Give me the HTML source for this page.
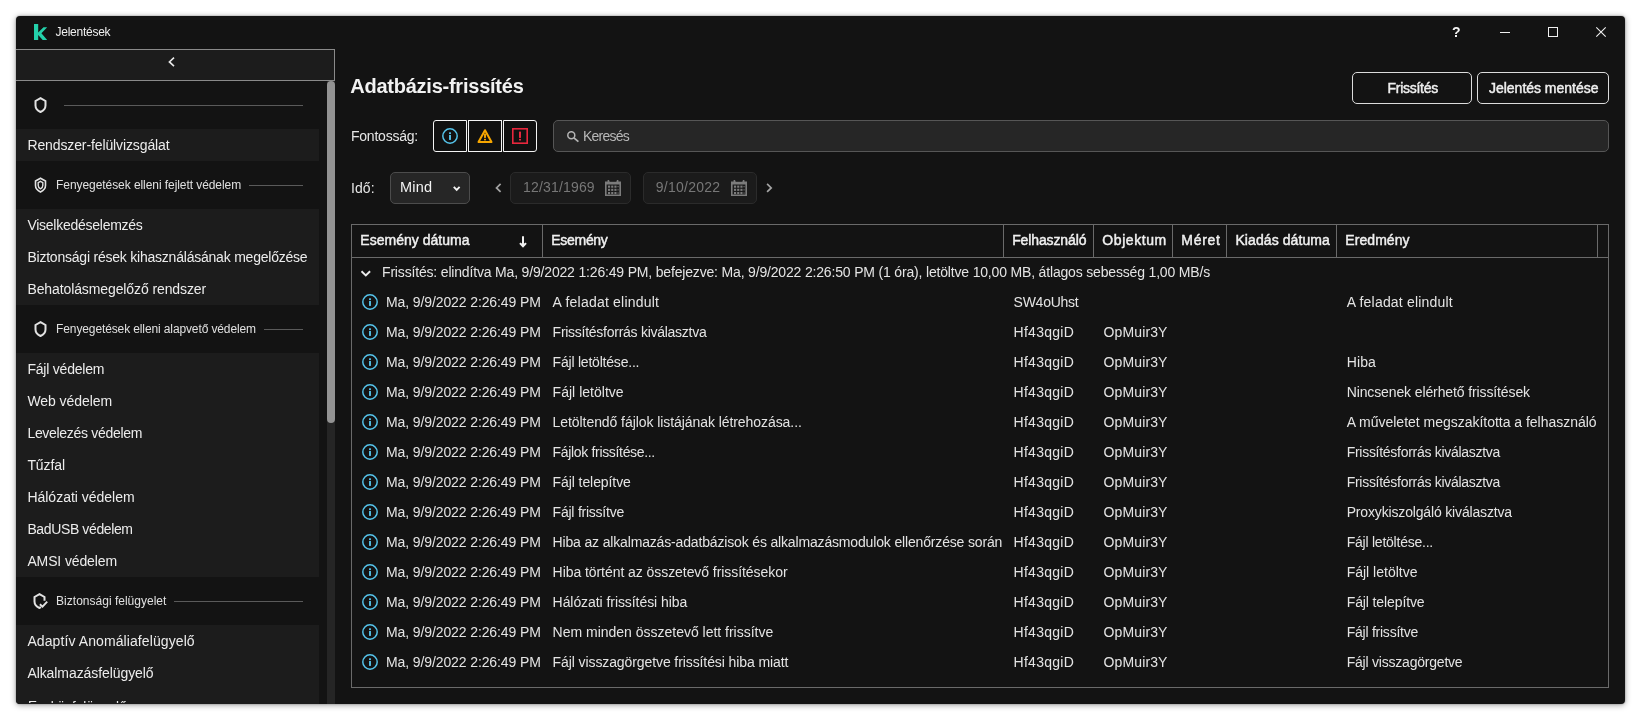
<!DOCTYPE html>
<html lang="hu">
<head>
<meta charset="utf-8">
<title>Jelentések</title>
<style>
*{box-sizing:border-box;margin:0;padding:0}
html,body{width:1641px;height:720px;overflow:hidden;background:#fff}
body{font-family:'Liberation Sans',sans-serif;position:relative;color:#e4e4e4}
.win{will-change:transform;position:absolute;left:16px;top:16px;width:1609px;height:688px;background:#131313;border-radius:4px;overflow:hidden;box-shadow:0 1px 6px rgba(0,0,0,.38),0 0 2px rgba(0,0,0,.35)}
.win *{position:absolute}
.titlebar,.sidebar,.main,.table,.row{position:static!important}
.t{white-space:nowrap;display:block}
.item{left:0;width:303px;height:32px;background:#1c1c1c}
.hl{height:1px;background:#5a5a5a}
svg{overflow:visible}
</style>
</head>
<body>
<div class="win">
<div class="titlebar">
<svg style="left:18px;top:8px" width="13" height="16" viewBox="0 0 13 16"><path d="M0 0H4.2V8.5L9.5 3.2H13.2L7.4 9.3 13.2 16H8.7L4.2 11V16H0Z" fill="#24d1ab"/></svg>
<span class="t" style="left:39.5px;top:9.7px;font-size:12px;line-height:12px;color:#f0f0f0;letter-spacing:-0.255px">Jelentések</span>
<span class="t" style="left:1436.1px;top:9.3px;font-size:14px;line-height:14px;color:#f4f4f4;letter-spacing:-0.102px;font-weight:700">?</span>
<svg style="left:1484px;top:11px" width="10" height="10" viewBox="0 0 10 10"><path d="M0 5.5H10" stroke="#f0f0f0" stroke-width="1"/></svg>
<svg style="left:1532px;top:11px" width="10" height="10" viewBox="0 0 10 10"><rect x="0.5" y="0.5" width="9" height="9" fill="none" stroke="#f0f0f0" stroke-width="1"/></svg>
<svg style="left:1580px;top:11px" width="10" height="10" viewBox="0 0 10 10"><path d="M0.3 0.3L9.7 9.7M9.7 0.3L0.3 9.7" stroke="#f0f0f0" stroke-width="1.1"/></svg>
</div>
<div class="sidebar">
<div class="collapse" style="left:0px;top:33px;width:319px;height:32px;background:#1c1c1c;border:1px solid #8a8a8a;border-left:none"></div>
<svg style="left:152px;top:41px" width="7" height="10" viewBox="0 0 7 10"><path d="M6 0.6L1.4 4.9 6 9.2" fill="none" stroke="#e8e8e8" stroke-width="1.6"/></svg>
<div style="left:311px;top:65px;width:8px;height:623px;background:#252525"></div>
<div style="left:311px;top:65px;width:8px;height:342px;background:#939393;border-radius:4px"></div>
<svg style="left:17.5px;top:81px" width="13" height="16" viewBox="0 0 13 16"><path d="M6.5 1.2 11.5 4V8.6C11.5 11.6 9.4 13.7 6.5 15 3.6 13.7 1.5 11.6 1.5 8.6V4Z" fill="none" stroke="#e2e2e2" stroke-width="2"/></svg>
<div class="hl" style="left:48px;top:89px;width:239px;height:1px;"></div>
<div class="item" style="left:0px;top:113px;width:303px;height:32px;"></div>
<span class="t" style="left:11.4px;top:122.0px;font-size:14px;line-height:14px;color:#ececec;letter-spacing:-0.112px">Rendszer-felülvizsgálat</span>
<svg style="left:17.5px;top:161px" width="13" height="16" viewBox="0 0 13 16"><path d="M6.5 1.2 11.5 4V8.6C11.5 11.6 9.4 13.7 6.5 15 3.6 13.7 1.5 11.6 1.5 8.6V4Z" fill="none" stroke="#e2e2e2" stroke-width="1.6"/><path d="M6.5 4.4 8.8 5.7V8.4C8.8 10 7.8 11.1 6.5 11.8 5.2 11.1 4.2 10 4.2 8.4V5.7Z" fill="none" stroke="#e2e2e2" stroke-width="1.4"/></svg>
<span class="t" style="left:40.1px;top:162.7px;font-size:12px;line-height:12px;color:#e0e0e0;letter-spacing:-0.070px">Fenyegetések elleni fejlett védelem</span>
<div class="hl" style="left:233.1px;top:169px;width:53.9px;height:1px;"></div>
<div class="item" style="left:0px;top:193px;width:303px;height:32px;"></div>
<span class="t" style="left:11.4px;top:202.0px;font-size:14px;line-height:14px;color:#ececec;letter-spacing:-0.258px">Viselkedéselemzés</span>
<div class="item" style="left:0px;top:225px;width:303px;height:32px;"></div>
<span class="t" style="left:11.4px;top:234.0px;font-size:14px;line-height:14px;color:#ececec;letter-spacing:-0.220px">Biztonsági rések kihasználásának megelőzése</span>
<div class="item" style="left:0px;top:257px;width:303px;height:32px;"></div>
<span class="t" style="left:11.4px;top:266.0px;font-size:14px;line-height:14px;color:#ececec;letter-spacing:-0.103px">Behatolásmegelőző rendszer</span>
<svg style="left:17.5px;top:305px" width="13" height="16" viewBox="0 0 13 16"><path d="M6.5 1.2 11.5 4V8.6C11.5 11.6 9.4 13.7 6.5 15 3.6 13.7 1.5 11.6 1.5 8.6V4Z" fill="none" stroke="#e2e2e2" stroke-width="2"/></svg>
<span class="t" style="left:40.1px;top:306.7px;font-size:12px;line-height:12px;color:#e0e0e0;letter-spacing:-0.119px">Fenyegetések elleni alapvető védelem</span>
<div class="hl" style="left:248px;top:313px;width:39px;height:1px;"></div>
<div class="item" style="left:0px;top:337px;width:303px;height:32px;"></div>
<span class="t" style="left:11.4px;top:346.0px;font-size:14px;line-height:14px;color:#ececec;letter-spacing:-0.210px">Fájl védelem</span>
<div class="item" style="left:0px;top:369px;width:303px;height:32px;"></div>
<span class="t" style="left:11.4px;top:378.0px;font-size:14px;line-height:14px;color:#ececec;letter-spacing:-0.048px">Web védelem</span>
<div class="item" style="left:0px;top:401px;width:303px;height:32px;"></div>
<span class="t" style="left:11.4px;top:410.0px;font-size:14px;line-height:14px;color:#ececec;letter-spacing:-0.300px">Levelezés védelem</span>
<div class="item" style="left:0px;top:433px;width:303px;height:32px;"></div>
<span class="t" style="left:11.4px;top:442.0px;font-size:14px;line-height:14px;color:#ececec;letter-spacing:-0.093px">Tűzfal</span>
<div class="item" style="left:0px;top:465px;width:303px;height:32px;"></div>
<span class="t" style="left:11.4px;top:474.0px;font-size:14px;line-height:14px;color:#ececec;letter-spacing:-0.009px">Hálózati védelem</span>
<div class="item" style="left:0px;top:497px;width:303px;height:32px;"></div>
<span class="t" style="left:11.4px;top:506.0px;font-size:14px;line-height:14px;color:#ececec;letter-spacing:-0.374px">BadUSB védelem</span>
<div class="item" style="left:0px;top:529px;width:303px;height:32px;"></div>
<span class="t" style="left:11.4px;top:538.0px;font-size:14px;line-height:14px;color:#ececec;letter-spacing:-0.126px">AMSI védelem</span>
<svg style="left:16.5px;top:577px" width="15" height="16" viewBox="0 0 15 16"><path d="M11.5 7.8V4L6.5 1.2 1.5 4V8.6C1.5 11.6 3.6 13.7 6.5 15L8 14.2" fill="none" stroke="#e2e2e2" stroke-width="2"/><path d="M6.9 11.2 9.5 13.6 14.2 8.6" fill="none" stroke="#e2e2e2" stroke-width="1.9"/></svg>
<span class="t" style="left:40.1px;top:578.7px;font-size:12px;line-height:12px;color:#e0e0e0;letter-spacing:0.010px">Biztonsági felügyelet</span>
<div class="hl" style="left:158.3px;top:585px;width:128.7px;height:1px;"></div>
<div class="item" style="left:0px;top:609px;width:303px;height:32px;"></div>
<span class="t" style="left:11.4px;top:618.0px;font-size:14px;line-height:14px;color:#ececec;letter-spacing:0.094px">Adaptív Anomáliafelügyelő</span>
<div class="item" style="left:0px;top:641px;width:303px;height:32px;"></div>
<span class="t" style="left:11.4px;top:650.0px;font-size:14px;line-height:14px;color:#ececec;letter-spacing:-0.076px">Alkalmazásfelügyelő</span>
<div class="item" style="left:0px;top:673px;width:303px;height:32px;"></div>
<span class="t" style="left:12.0px;top:683.0px;font-size:13.5px;line-height:13.5px;color:#ececec;letter-spacing:0.075px">Eszközfelügyelő</span>
<div style="left:0px;top:687px;width:303px;height:1px;background:#1c1c1c"></div>
</div>
<div class="main">
<span class="t h1" style="left:334.2px;top:60.2px;font-size:20px;line-height:20px;color:#f2f2f2;letter-spacing:-0.236px;font-weight:700">Adatbázis-frissítés</span>
<div class="btn" style="left:1336px;top:56px;width:120px;height:32px;border:1px solid #dcdcdc;border-radius:5px;background:#131313"></div>
<span class="t" style="left:1371.5px;top:64.8px;font-size:14px;line-height:14px;color:#f0f0f0;letter-spacing:-0.266px;-webkit-text-stroke:0.45px #f0f0f0">Frissítés</span>
<div class="btn" style="left:1461px;top:56px;width:132px;height:32px;border:1px solid #dcdcdc;border-radius:5px;background:#131313"></div>
<span class="t" style="left:1473.0px;top:64.8px;font-size:14px;line-height:14px;color:#f0f0f0;letter-spacing:-0.018px;-webkit-text-stroke:0.45px #f0f0f0">Jelentés mentése</span>
<span class="t" style="left:334.9px;top:113.0px;font-size:14px;line-height:14px;color:#e6e6e6;letter-spacing:-0.212px">Fontosság:</span>
<div style="left:417px;top:104px;width:34px;height:32px;background:#111;border:1px solid #f4f4f4;border-radius:3px 0 0 3px"></div>
<div style="left:452px;top:104px;width:34px;height:32px;background:#111;border:1px solid #f4f4f4;"></div>
<div style="left:487px;top:104px;width:34px;height:32px;background:#111;border:1px solid #f4f4f4;border-radius:0 3px 3px 0"></div>
<svg style="left:426px;top:112px" width="16" height="16" viewBox="0 0 16 16"><circle cx="8" cy="8" r="7.2" fill="none" stroke="#55c3ea" stroke-width="1.5"/><rect x="7.05" y="7" width="1.9" height="4.9" fill="#55c3ea"/><rect x="7.05" y="4.3" width="1.9" height="1.8" fill="#55c3ea"/></svg>
<svg style="left:461px;top:112px" width="16" height="16" viewBox="0 0 16 16"><path d="M8 2.2 14.5 14H1.5Z" fill="none" stroke="#f7a600" stroke-width="2" stroke-linejoin="round"/><rect x="7.05" y="5.6" width="1.9" height="4.3" fill="#f7a600"/><rect x="7.05" y="10.8" width="1.9" height="1.6" fill="#f7a600"/></svg>
<svg style="left:496px;top:112px" width="16" height="16" viewBox="0 0 16 16"><rect x="0.8" y="0.8" width="14.4" height="14.4" fill="none" stroke="#e8273d" stroke-width="1.6"/><rect x="7" y="3.6" width="2" height="6.3" fill="#e8273d"/><rect x="7" y="10.9" width="2" height="1.6" fill="#e8273d"/></svg>
<div class="search" style="left:537px;top:104px;width:1056px;height:32px;background:#262626;border:1px solid #565656;border-radius:5px"></div>
<svg style="left:551px;top:114.5px" width="12" height="11" viewBox="0 0 12 11"><circle cx="4.3" cy="4.3" r="3.5" fill="none" stroke="#b4b4b4" stroke-width="1.5"/><path d="M6.9 6.9 11.4 10.6" stroke="#b4b4b4" stroke-width="1.8"/></svg>
<span class="t" style="left:567.0px;top:112.8px;font-size:14px;line-height:14px;color:#b8b8b8;letter-spacing:-0.750px">Keresés</span>
<span class="t" style="left:334.9px;top:164.6px;font-size:14px;line-height:14px;color:#e6e6e6;letter-spacing:0.134px">Idő:</span>
<div class="select" style="left:374px;top:156px;width:80px;height:32px;background:#262626;border:1px solid #4c4c4c;border-radius:5px"></div>
<span class="t" style="left:383.9px;top:164.2px;font-size:14.5px;line-height:14.5px;color:#f2f2f2;letter-spacing:0.289px">Mind</span>
<svg style="left:436.5px;top:169.5px" width="8" height="6" viewBox="0 0 8 6"><path d="M0.8 0.9 3.7 3.9 6.6 0.9" fill="none" stroke="#f2f2f2" stroke-width="1.9"/></svg>
<svg style="left:479px;top:166.5px" width="7" height="10" viewBox="0 0 7 10"><path d="M5.6 0.9 1.5 4.9 5.6 8.9" fill="none" stroke="#a4a4a4" stroke-width="1.7"/></svg>
<svg style="left:750px;top:166.5px" width="7" height="10" viewBox="0 0 7 10"><path d="M1.1 0.9 5.2 4.9 1.1 8.9" fill="none" stroke="#a4a4a4" stroke-width="1.7"/></svg>
<div class="date" style="left:494px;top:156px;width:121px;height:32px;background:#1b1b1b;border:1px solid #2b2b2b;border-radius:5px"></div>
<div class="date" style="left:627px;top:156px;width:114px;height:32px;background:#1b1b1b;border:1px solid #2b2b2b;border-radius:5px"></div>
<span class="t" style="left:507.1px;top:164.4px;font-size:14px;line-height:14px;color:#777;letter-spacing:0.165px">12/31/1969</span>
<span class="t" style="left:639.8px;top:164.4px;font-size:14px;line-height:14px;color:#777;letter-spacing:0.245px">9/10/2022</span>
<svg style="left:589px;top:164px" width="16" height="16" viewBox="0 0 16 16"><g fill="#7c7c7c"><path d="M0 1.6H16V16H0ZM1.6 4.4V14.6H14.4V4.4Z" fill-rule="evenodd"/><rect x="2.6" y="0" width="1.6" height="2.2"/><rect x="11.8" y="0" width="1.6" height="2.2"/><rect x="3.0" y="5.6" width="2.1" height="2.1"/><rect x="6.2" y="5.6" width="2.1" height="2.1"/><rect x="9.4" y="5.6" width="2.1" height="2.1"/><rect x="12.5" y="6.1" width="1.1" height="1.1"/><rect x="3.0" y="8.8" width="2.1" height="2.1"/><rect x="6.2" y="8.8" width="2.1" height="2.1"/><rect x="9.4" y="8.8" width="2.1" height="2.1"/><rect x="12.5" y="9.3" width="1.1" height="1.1"/><rect x="3.0" y="12.0" width="2.1" height="2.1"/><rect x="6.2" y="12.0" width="2.1" height="2.1"/><rect x="9.4" y="12.0" width="2.1" height="2.1"/><rect x="12.5" y="12.5" width="1.1" height="1.1"/></g><rect x="5" y="0.2" width="6" height="1.4" fill="#1b1b1b"/></svg>
<svg style="left:715px;top:164px" width="16" height="16" viewBox="0 0 16 16"><g fill="#7c7c7c"><path d="M0 1.6H16V16H0ZM1.6 4.4V14.6H14.4V4.4Z" fill-rule="evenodd"/><rect x="2.6" y="0" width="1.6" height="2.2"/><rect x="11.8" y="0" width="1.6" height="2.2"/><rect x="3.0" y="5.6" width="2.1" height="2.1"/><rect x="6.2" y="5.6" width="2.1" height="2.1"/><rect x="9.4" y="5.6" width="2.1" height="2.1"/><rect x="12.5" y="6.1" width="1.1" height="1.1"/><rect x="3.0" y="8.8" width="2.1" height="2.1"/><rect x="6.2" y="8.8" width="2.1" height="2.1"/><rect x="9.4" y="8.8" width="2.1" height="2.1"/><rect x="12.5" y="9.3" width="1.1" height="1.1"/><rect x="3.0" y="12.0" width="2.1" height="2.1"/><rect x="6.2" y="12.0" width="2.1" height="2.1"/><rect x="9.4" y="12.0" width="2.1" height="2.1"/><rect x="12.5" y="12.5" width="1.1" height="1.1"/></g><rect x="5" y="0.2" width="6" height="1.4" fill="#1b1b1b"/></svg>
<div class="table">
<div class="grid" style="left:335px;top:208px;width:1258px;height:464px;border:1px solid #6a6a6a"></div>
<div style="left:335px;top:241px;width:1258px;height:1px;background:#6a6a6a"></div>
<div style="left:526px;top:208px;width:1px;height:34px;background:#6a6a6a"></div>
<div style="left:987px;top:208px;width:1px;height:34px;background:#6a6a6a"></div>
<div style="left:1077px;top:208px;width:1px;height:34px;background:#6a6a6a"></div>
<div style="left:1156px;top:208px;width:1px;height:34px;background:#6a6a6a"></div>
<div style="left:1210px;top:208px;width:1px;height:34px;background:#6a6a6a"></div>
<div style="left:1320px;top:208px;width:1px;height:34px;background:#6a6a6a"></div>
<div style="left:1581px;top:208px;width:1px;height:34px;background:#6a6a6a"></div>
<span class="t th" style="left:344.3px;top:216.9px;font-size:14px;line-height:14px;color:#f0f0f0;letter-spacing:0.024px;-webkit-text-stroke:0.45px #f0f0f0">Esemény dátuma</span>
<span class="t th" style="left:535.3px;top:216.9px;font-size:14px;line-height:14px;color:#f0f0f0;letter-spacing:-0.300px;-webkit-text-stroke:0.45px #f0f0f0">Esemény</span>
<span class="t th" style="left:996.2px;top:216.9px;font-size:14px;line-height:14px;color:#f0f0f0;letter-spacing:-0.124px;-webkit-text-stroke:0.45px #f0f0f0">Felhasználó</span>
<span class="t th" style="left:1086.3px;top:216.9px;font-size:14px;line-height:14px;color:#f0f0f0;letter-spacing:0.577px;-webkit-text-stroke:0.45px #f0f0f0">Objektum</span>
<span class="t th" style="left:1165.3px;top:216.9px;font-size:14px;line-height:14px;color:#f0f0f0;letter-spacing:0.716px;-webkit-text-stroke:0.45px #f0f0f0">Méret</span>
<span class="t th" style="left:1219.4px;top:216.9px;font-size:14px;line-height:14px;color:#f0f0f0;letter-spacing:0.088px;-webkit-text-stroke:0.45px #f0f0f0">Kiadás dátuma</span>
<span class="t th" style="left:1329.3px;top:216.9px;font-size:14px;line-height:14px;color:#f0f0f0;letter-spacing:0.064px;-webkit-text-stroke:0.45px #f0f0f0">Eredmény</span>
<svg style="left:503.1px;top:219.8px" width="8" height="12" viewBox="0 0 8 12"><path d="M4 0.2V9.4" fill="none" stroke="#f0f0f0" stroke-width="2"/><path d="M1 7.1 4 10.3 7 7.1" fill="none" stroke="#f0f0f0" stroke-width="2.1"/></svg>
<svg style="left:345.2px;top:253.5px" width="10" height="7" viewBox="0 0 10 7"><path d="M0.5 1.3 4.8 5.4 9.1 1.3" fill="none" stroke="#ececec" stroke-width="1.9"/></svg>
<span class="t" style="left:366.0px;top:249.0px;font-size:14px;line-height:14px;color:#e4e4e4;letter-spacing:-0.173px">Frissítés: elindítva Ma, 9/9/2022 1:26:49 PM, befejezve: Ma, 9/9/2022 2:26:50 PM (1 óra), letöltve 10,00 MB, átlagos sebesség 1,00 MB/s</span>
<div class="row">
<svg style="left:346px;top:278px" width="16" height="16" viewBox="0 0 16 16"><circle cx="8" cy="8" r="7.2" fill="none" stroke="#55c3ea" stroke-width="1.5"/><rect x="7.05" y="7" width="1.9" height="4.9" fill="#55c3ea"/><rect x="7.05" y="4.3" width="1.9" height="1.8" fill="#55c3ea"/></svg>
<span class="t" style="left:370.0px;top:279.0px;font-size:14px;line-height:14px;color:#e4e4e4;letter-spacing:-0.107px">Ma, 9/9/2022 2:26:49 PM</span>
<span class="t" style="left:536.6px;top:279.0px;font-size:14px;line-height:14px;color:#e4e4e4;letter-spacing:0.212px">A feladat elindult</span>
<span class="t" style="left:997.6px;top:279.0px;font-size:14px;line-height:14px;color:#e4e4e4;letter-spacing:-0.266px">SW4oUhst</span>
<span class="t" style="left:1330.7px;top:279.0px;font-size:14px;line-height:14px;color:#e4e4e4;letter-spacing:0.195px">A feladat elindult</span>
</div>
<div class="row">
<svg style="left:346px;top:308px" width="16" height="16" viewBox="0 0 16 16"><circle cx="8" cy="8" r="7.2" fill="none" stroke="#55c3ea" stroke-width="1.5"/><rect x="7.05" y="7" width="1.9" height="4.9" fill="#55c3ea"/><rect x="7.05" y="4.3" width="1.9" height="1.8" fill="#55c3ea"/></svg>
<span class="t" style="left:370.0px;top:309.0px;font-size:14px;line-height:14px;color:#e4e4e4;letter-spacing:-0.107px">Ma, 9/9/2022 2:26:49 PM</span>
<span class="t" style="left:536.6px;top:309.0px;font-size:14px;line-height:14px;color:#e4e4e4;letter-spacing:-0.265px">Frissítésforrás kiválasztva</span>
<span class="t" style="left:997.6px;top:309.0px;font-size:14px;line-height:14px;color:#e4e4e4;letter-spacing:0.255px">Hf43qgiD</span>
<span class="t" style="left:1087.6px;top:309.0px;font-size:14px;line-height:14px;color:#e4e4e4;letter-spacing:0.118px">OpMuir3Y</span>
</div>
<div class="row">
<svg style="left:346px;top:338px" width="16" height="16" viewBox="0 0 16 16"><circle cx="8" cy="8" r="7.2" fill="none" stroke="#55c3ea" stroke-width="1.5"/><rect x="7.05" y="7" width="1.9" height="4.9" fill="#55c3ea"/><rect x="7.05" y="4.3" width="1.9" height="1.8" fill="#55c3ea"/></svg>
<span class="t" style="left:370.0px;top:339.0px;font-size:14px;line-height:14px;color:#e4e4e4;letter-spacing:-0.107px">Ma, 9/9/2022 2:26:49 PM</span>
<span class="t" style="left:536.6px;top:339.0px;font-size:14px;line-height:14px;color:#e4e4e4;letter-spacing:-0.213px">Fájl letöltése...</span>
<span class="t" style="left:997.6px;top:339.0px;font-size:14px;line-height:14px;color:#e4e4e4;letter-spacing:0.255px">Hf43qgiD</span>
<span class="t" style="left:1087.6px;top:339.0px;font-size:14px;line-height:14px;color:#e4e4e4;letter-spacing:0.118px">OpMuir3Y</span>
<span class="t" style="left:1330.7px;top:339.0px;font-size:14px;line-height:14px;color:#e4e4e4;letter-spacing:0.121px">Hiba</span>
</div>
<div class="row">
<svg style="left:346px;top:368px" width="16" height="16" viewBox="0 0 16 16"><circle cx="8" cy="8" r="7.2" fill="none" stroke="#55c3ea" stroke-width="1.5"/><rect x="7.05" y="7" width="1.9" height="4.9" fill="#55c3ea"/><rect x="7.05" y="4.3" width="1.9" height="1.8" fill="#55c3ea"/></svg>
<span class="t" style="left:370.0px;top:369.0px;font-size:14px;line-height:14px;color:#e4e4e4;letter-spacing:-0.107px">Ma, 9/9/2022 2:26:49 PM</span>
<span class="t" style="left:536.6px;top:369.0px;font-size:14px;line-height:14px;color:#e4e4e4;letter-spacing:0.021px">Fájl letöltve</span>
<span class="t" style="left:997.6px;top:369.0px;font-size:14px;line-height:14px;color:#e4e4e4;letter-spacing:0.255px">Hf43qgiD</span>
<span class="t" style="left:1087.6px;top:369.0px;font-size:14px;line-height:14px;color:#e4e4e4;letter-spacing:0.118px">OpMuir3Y</span>
<span class="t" style="left:1330.7px;top:369.0px;font-size:14px;line-height:14px;color:#e4e4e4;letter-spacing:-0.117px">Nincsenek elérhető frissítések</span>
</div>
<div class="row">
<svg style="left:346px;top:398px" width="16" height="16" viewBox="0 0 16 16"><circle cx="8" cy="8" r="7.2" fill="none" stroke="#55c3ea" stroke-width="1.5"/><rect x="7.05" y="7" width="1.9" height="4.9" fill="#55c3ea"/><rect x="7.05" y="4.3" width="1.9" height="1.8" fill="#55c3ea"/></svg>
<span class="t" style="left:370.0px;top:399.0px;font-size:14px;line-height:14px;color:#e4e4e4;letter-spacing:-0.107px">Ma, 9/9/2022 2:26:49 PM</span>
<span class="t" style="left:536.6px;top:399.0px;font-size:14px;line-height:14px;color:#e4e4e4;letter-spacing:-0.069px">Letöltendő fájlok listájának létrehozása...</span>
<span class="t" style="left:997.6px;top:399.0px;font-size:14px;line-height:14px;color:#e4e4e4;letter-spacing:0.255px">Hf43qgiD</span>
<span class="t" style="left:1087.6px;top:399.0px;font-size:14px;line-height:14px;color:#e4e4e4;letter-spacing:0.118px">OpMuir3Y</span>
<span class="t" style="left:1330.7px;top:399.0px;font-size:14px;line-height:14px;color:#e4e4e4;letter-spacing:-0.017px">A műveletet megszakította a felhasználó</span>
</div>
<div class="row">
<svg style="left:346px;top:428px" width="16" height="16" viewBox="0 0 16 16"><circle cx="8" cy="8" r="7.2" fill="none" stroke="#55c3ea" stroke-width="1.5"/><rect x="7.05" y="7" width="1.9" height="4.9" fill="#55c3ea"/><rect x="7.05" y="4.3" width="1.9" height="1.8" fill="#55c3ea"/></svg>
<span class="t" style="left:370.0px;top:429.0px;font-size:14px;line-height:14px;color:#e4e4e4;letter-spacing:-0.107px">Ma, 9/9/2022 2:26:49 PM</span>
<span class="t" style="left:536.6px;top:429.0px;font-size:14px;line-height:14px;color:#e4e4e4;letter-spacing:-0.330px">Fájlok frissítése...</span>
<span class="t" style="left:997.6px;top:429.0px;font-size:14px;line-height:14px;color:#e4e4e4;letter-spacing:0.255px">Hf43qgiD</span>
<span class="t" style="left:1087.6px;top:429.0px;font-size:14px;line-height:14px;color:#e4e4e4;letter-spacing:0.118px">OpMuir3Y</span>
<span class="t" style="left:1330.7px;top:429.0px;font-size:14px;line-height:14px;color:#e4e4e4;letter-spacing:-0.284px">Frissítésforrás kiválasztva</span>
</div>
<div class="row">
<svg style="left:346px;top:458px" width="16" height="16" viewBox="0 0 16 16"><circle cx="8" cy="8" r="7.2" fill="none" stroke="#55c3ea" stroke-width="1.5"/><rect x="7.05" y="7" width="1.9" height="4.9" fill="#55c3ea"/><rect x="7.05" y="4.3" width="1.9" height="1.8" fill="#55c3ea"/></svg>
<span class="t" style="left:370.0px;top:459.0px;font-size:14px;line-height:14px;color:#e4e4e4;letter-spacing:-0.107px">Ma, 9/9/2022 2:26:49 PM</span>
<span class="t" style="left:536.6px;top:459.0px;font-size:14px;line-height:14px;color:#e4e4e4;letter-spacing:-0.086px">Fájl telepítve</span>
<span class="t" style="left:997.6px;top:459.0px;font-size:14px;line-height:14px;color:#e4e4e4;letter-spacing:0.255px">Hf43qgiD</span>
<span class="t" style="left:1087.6px;top:459.0px;font-size:14px;line-height:14px;color:#e4e4e4;letter-spacing:0.118px">OpMuir3Y</span>
<span class="t" style="left:1330.7px;top:459.0px;font-size:14px;line-height:14px;color:#e4e4e4;letter-spacing:-0.284px">Frissítésforrás kiválasztva</span>
</div>
<div class="row">
<svg style="left:346px;top:488px" width="16" height="16" viewBox="0 0 16 16"><circle cx="8" cy="8" r="7.2" fill="none" stroke="#55c3ea" stroke-width="1.5"/><rect x="7.05" y="7" width="1.9" height="4.9" fill="#55c3ea"/><rect x="7.05" y="4.3" width="1.9" height="1.8" fill="#55c3ea"/></svg>
<span class="t" style="left:370.0px;top:489.0px;font-size:14px;line-height:14px;color:#e4e4e4;letter-spacing:-0.107px">Ma, 9/9/2022 2:26:49 PM</span>
<span class="t" style="left:536.6px;top:489.0px;font-size:14px;line-height:14px;color:#e4e4e4;letter-spacing:-0.233px">Fájl frissítve</span>
<span class="t" style="left:997.6px;top:489.0px;font-size:14px;line-height:14px;color:#e4e4e4;letter-spacing:0.255px">Hf43qgiD</span>
<span class="t" style="left:1087.6px;top:489.0px;font-size:14px;line-height:14px;color:#e4e4e4;letter-spacing:0.118px">OpMuir3Y</span>
<span class="t" style="left:1330.7px;top:489.0px;font-size:14px;line-height:14px;color:#e4e4e4;letter-spacing:-0.160px">Proxykiszolgáló kiválasztva</span>
</div>
<div class="row">
<svg style="left:346px;top:518px" width="16" height="16" viewBox="0 0 16 16"><circle cx="8" cy="8" r="7.2" fill="none" stroke="#55c3ea" stroke-width="1.5"/><rect x="7.05" y="7" width="1.9" height="4.9" fill="#55c3ea"/><rect x="7.05" y="4.3" width="1.9" height="1.8" fill="#55c3ea"/></svg>
<span class="t" style="left:370.0px;top:519.0px;font-size:14px;line-height:14px;color:#e4e4e4;letter-spacing:-0.107px">Ma, 9/9/2022 2:26:49 PM</span>
<span class="t" style="left:536.6px;top:519.0px;font-size:14px;line-height:14px;color:#e4e4e4;letter-spacing:-0.161px">Hiba az alkalmazás-adatbázisok és alkalmazásmodulok ellenőrzése során</span>
<span class="t" style="left:997.6px;top:519.0px;font-size:14px;line-height:14px;color:#e4e4e4;letter-spacing:0.255px">Hf43qgiD</span>
<span class="t" style="left:1087.6px;top:519.0px;font-size:14px;line-height:14px;color:#e4e4e4;letter-spacing:0.118px">OpMuir3Y</span>
<span class="t" style="left:1330.7px;top:519.0px;font-size:14px;line-height:14px;color:#e4e4e4;letter-spacing:-0.232px">Fájl letöltése...</span>
</div>
<div class="row">
<svg style="left:346px;top:548px" width="16" height="16" viewBox="0 0 16 16"><circle cx="8" cy="8" r="7.2" fill="none" stroke="#55c3ea" stroke-width="1.5"/><rect x="7.05" y="7" width="1.9" height="4.9" fill="#55c3ea"/><rect x="7.05" y="4.3" width="1.9" height="1.8" fill="#55c3ea"/></svg>
<span class="t" style="left:370.0px;top:549.0px;font-size:14px;line-height:14px;color:#e4e4e4;letter-spacing:-0.107px">Ma, 9/9/2022 2:26:49 PM</span>
<span class="t" style="left:536.6px;top:549.0px;font-size:14px;line-height:14px;color:#e4e4e4;letter-spacing:-0.062px">Hiba történt az összetevő frissítésekor</span>
<span class="t" style="left:997.6px;top:549.0px;font-size:14px;line-height:14px;color:#e4e4e4;letter-spacing:0.255px">Hf43qgiD</span>
<span class="t" style="left:1087.6px;top:549.0px;font-size:14px;line-height:14px;color:#e4e4e4;letter-spacing:0.118px">OpMuir3Y</span>
<span class="t" style="left:1330.7px;top:549.0px;font-size:14px;line-height:14px;color:#e4e4e4;letter-spacing:-0.004px">Fájl letöltve</span>
</div>
<div class="row">
<svg style="left:346px;top:578px" width="16" height="16" viewBox="0 0 16 16"><circle cx="8" cy="8" r="7.2" fill="none" stroke="#55c3ea" stroke-width="1.5"/><rect x="7.05" y="7" width="1.9" height="4.9" fill="#55c3ea"/><rect x="7.05" y="4.3" width="1.9" height="1.8" fill="#55c3ea"/></svg>
<span class="t" style="left:370.0px;top:579.0px;font-size:14px;line-height:14px;color:#e4e4e4;letter-spacing:-0.107px">Ma, 9/9/2022 2:26:49 PM</span>
<span class="t" style="left:536.6px;top:579.0px;font-size:14px;line-height:14px;color:#e4e4e4;letter-spacing:-0.066px">Hálózati frissítési hiba</span>
<span class="t" style="left:997.6px;top:579.0px;font-size:14px;line-height:14px;color:#e4e4e4;letter-spacing:0.255px">Hf43qgiD</span>
<span class="t" style="left:1087.6px;top:579.0px;font-size:14px;line-height:14px;color:#e4e4e4;letter-spacing:0.118px">OpMuir3Y</span>
<span class="t" style="left:1330.7px;top:579.0px;font-size:14px;line-height:14px;color:#e4e4e4;letter-spacing:-0.109px">Fájl telepítve</span>
</div>
<div class="row">
<svg style="left:346px;top:608px" width="16" height="16" viewBox="0 0 16 16"><circle cx="8" cy="8" r="7.2" fill="none" stroke="#55c3ea" stroke-width="1.5"/><rect x="7.05" y="7" width="1.9" height="4.9" fill="#55c3ea"/><rect x="7.05" y="4.3" width="1.9" height="1.8" fill="#55c3ea"/></svg>
<span class="t" style="left:370.0px;top:609.0px;font-size:14px;line-height:14px;color:#e4e4e4;letter-spacing:-0.107px">Ma, 9/9/2022 2:26:49 PM</span>
<span class="t" style="left:536.6px;top:609.0px;font-size:14px;line-height:14px;color:#e4e4e4;letter-spacing:-0.010px">Nem minden összetevő lett frissítve</span>
<span class="t" style="left:997.6px;top:609.0px;font-size:14px;line-height:14px;color:#e4e4e4;letter-spacing:0.255px">Hf43qgiD</span>
<span class="t" style="left:1087.6px;top:609.0px;font-size:14px;line-height:14px;color:#e4e4e4;letter-spacing:0.118px">OpMuir3Y</span>
<span class="t" style="left:1330.7px;top:609.0px;font-size:14px;line-height:14px;color:#e4e4e4;letter-spacing:-0.241px">Fájl frissítve</span>
</div>
<div class="row">
<svg style="left:346px;top:638px" width="16" height="16" viewBox="0 0 16 16"><circle cx="8" cy="8" r="7.2" fill="none" stroke="#55c3ea" stroke-width="1.5"/><rect x="7.05" y="7" width="1.9" height="4.9" fill="#55c3ea"/><rect x="7.05" y="4.3" width="1.9" height="1.8" fill="#55c3ea"/></svg>
<span class="t" style="left:370.0px;top:639.0px;font-size:14px;line-height:14px;color:#e4e4e4;letter-spacing:-0.107px">Ma, 9/9/2022 2:26:49 PM</span>
<span class="t" style="left:536.6px;top:639.0px;font-size:14px;line-height:14px;color:#e4e4e4;letter-spacing:-0.097px">Fájl visszagörgetve frissítési hiba miatt</span>
<span class="t" style="left:997.6px;top:639.0px;font-size:14px;line-height:14px;color:#e4e4e4;letter-spacing:0.255px">Hf43qgiD</span>
<span class="t" style="left:1087.6px;top:639.0px;font-size:14px;line-height:14px;color:#e4e4e4;letter-spacing:0.118px">OpMuir3Y</span>
<span class="t" style="left:1330.7px;top:639.0px;font-size:14px;line-height:14px;color:#e4e4e4;letter-spacing:-0.215px">Fájl visszagörgetve</span>
</div>
</div>
</div>
</div>
</body>
</html>
